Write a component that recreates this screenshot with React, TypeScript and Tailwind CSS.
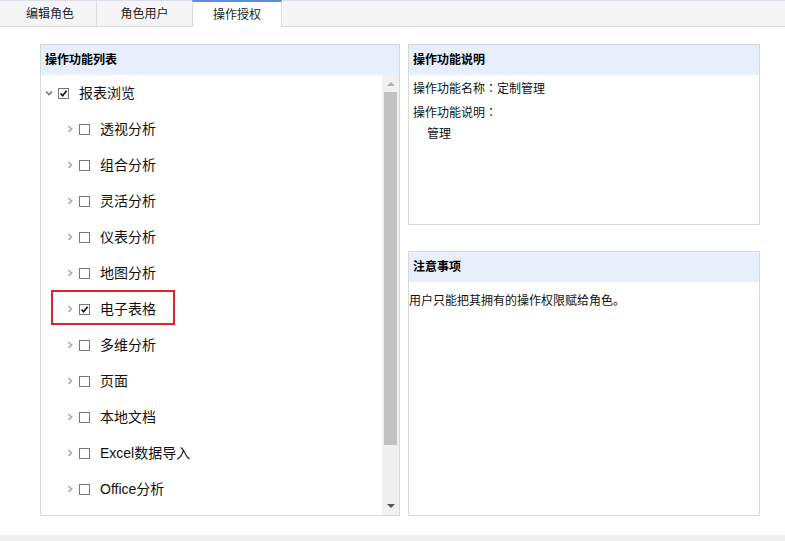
import React from 'react';

const font = { fontFamily: '"Liberation Sans", "Noto Sans CJK SC", sans-serif' };
const tc = { fontFamily: '"Noto Sans CJK TC", sans-serif' };

const children = ['透视分析', '组合分析', '灵活分析', '仪表分析', '地图分析', '电子表格', '多维分析', '页面', '本地文档', 'Excel数据导入', 'Office分析'];

const Chevron = ({ open }: { open?: boolean }) => (
  <svg width="8" height="8" viewBox="0 0 8 8" className="shrink-0">
    {open ? (
      <path d="M1 2.5 L4 5.5 L7 2.5" fill="none" stroke="#777" strokeWidth="1.6" />
    ) : (
      <path d="M2.5 1 L5.5 4 L2.5 7" fill="none" stroke="#aaa" strokeWidth="1.6" />
    )}
  </svg>
);

const Box = ({ checked }: { checked?: boolean }) => (
  <span className="w-[11px] h-[11px] border border-[#777] bg-white flex items-center justify-center shrink-0">
    {checked && (
      <svg width="9" height="9" viewBox="0 0 9 9">
        <path d="M1.5 4.5 L3.6 6.8 L7.6 1.8" fill="none" stroke="#111" strokeWidth="1.7" />
      </svg>
    )}
  </span>
);

const Header = ({ title }: { title: string }) => (
  <div className="h-[30px] bg-[#e8effc] flex items-center px-1 text-[12px] font-bold text-black">{title}</div>
);

export default function App() {
  return (
    <div className="w-[785px] h-[541px] bg-white relative overflow-hidden" style={font}>
      {/* Tabs */}
      <div className="h-[27px] bg-[#f5f5f5] border-t border-[#dde0ea] border-b border-b-[#dcdcdc] flex text-[12px] text-[#222]">
        <div className="w-[97px] flex items-center justify-center border-r border-[#dcdcdc] pl-[4px]">编辑角色</div>
        <div className="w-[95px] flex items-center justify-center">角色用户</div>
        <div className="w-[90px] h-[27px] -mt-px bg-white border-t-2 border-[#5b8ed6] border-x border-x-[#dcdcdc] flex items-center justify-center">
          操作授权
        </div>
      </div>

      <div className="flex pl-[40px] pt-[17px] gap-[8px]">
        {/* Left panel */}
        <div className="w-[360px] h-[472px] border border-[#d8d8d8] flex flex-col">
          <Header title="操作功能列表" />
          <div className="flex flex-1 min-h-0">
            <div className="flex-1 text-[14px] text-[#111]">
              <div className="h-[36px] flex items-center pl-[4px] gap-[5px]">
                <Chevron open />
                <Box checked />
                <span className="ml-[5px]">报表浏览</span>
              </div>
              {children.map((c) => (
                <div key={c} className="relative h-[36px] flex items-center pl-[25px] gap-[5px]">
                  {c === '电子表格' && (
                    <span className="absolute left-[10px] top-[-1px] w-[124px] h-[35px] border-2 border-[#e5202a]" />
                  )}
                  <Chevron />
                  <Box checked={c === '电子表格'} />
                  <span className="ml-[5px]">{c}</span>
                </div>
              ))}
            </div>
            {/* Scrollbar */}
            <div className="w-[17px] bg-[#f0f0f0] flex flex-col items-center">
              <div className="h-[17px] flex items-center justify-center">
                <svg width="8" height="5" viewBox="0 0 8 5"><path d="M0 5 L4 1 L8 5 Z" fill="#b0b0b0" /></svg>
              </div>
              <div className="w-[13px] h-[353px] bg-[#c1c1c1]" />
              <div className="flex-1" />
              <div className="h-[17px] flex items-center justify-center">
                <svg width="8" height="5" viewBox="0 0 8 5"><path d="M0 0 L8 0 L4 4 Z" fill="#555" /></svg>
              </div>
            </div>
          </div>
        </div>

        {/* Right column */}
        <div className="w-[352px] flex flex-col gap-[26px]">
          <div className="h-[181px] border border-[#d8d8d8]">
            <Header title="操作功能说明" />
            <div className="px-1 text-[12px] text-[#111]">
              <div className="mt-[4px]">操作功能名称<span style={tc}>：</span>定制管理</div>
              <div className="mt-[5px]">操作功能说明<span style={tc}>：</span></div>
              <div className="mt-[3px] pl-[14px]">管理</div>
            </div>
          </div>
          <div className="h-[265px] border border-[#d8d8d8]">
            <Header title="注意事项" />
            <div className="text-[12px] text-[#111] mt-[10px]">用户只能把其拥有的操作权限赋给角色。</div>
          </div>
        </div>
      </div>

      <div className="absolute left-0 right-0 bottom-0 h-[6px] bg-[#f0f0f0]" />
    </div>
  );
}
